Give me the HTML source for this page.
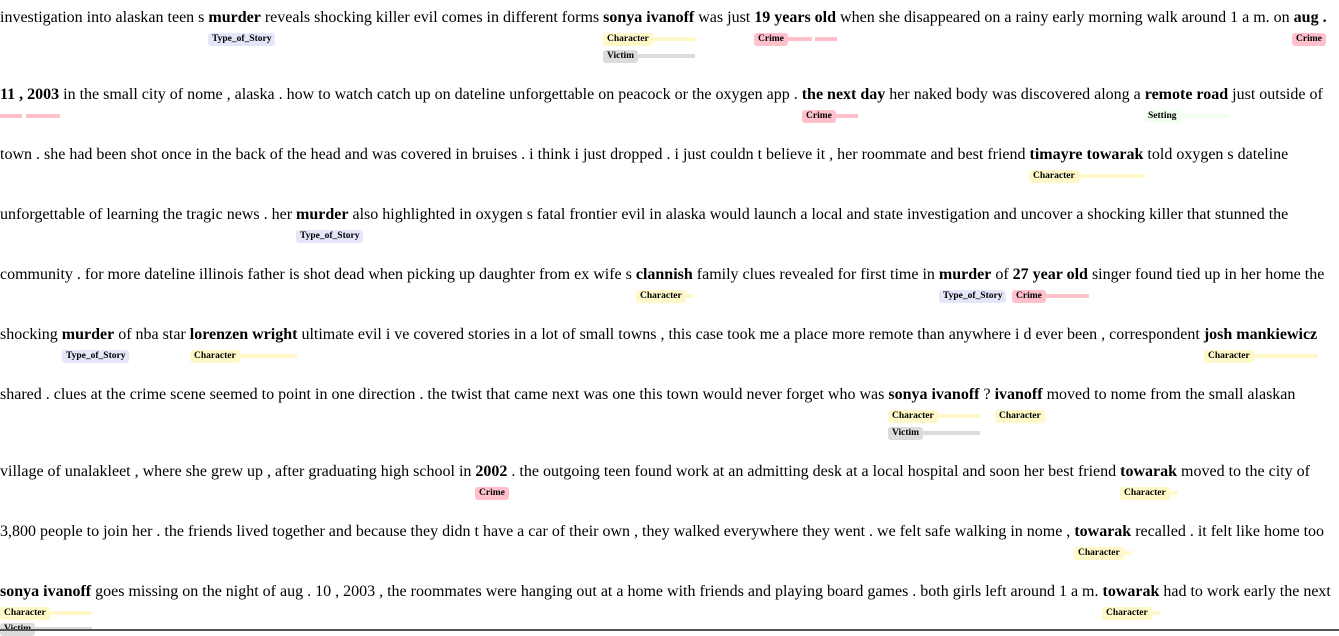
<!DOCTYPE html>
<html><head><meta charset="utf-8"><style>
body{margin:0;width:1339px;height:631px;background:#fff;position:relative;overflow:hidden;font-family:"Liberation Serif",serif;}
.t{position:absolute;left:0;font-size:16px;white-space:nowrap;color:#000;line-height:18px;margin-top:1px;}
.l{position:absolute;font-size:9.5px;font-weight:bold;padding:0 4px;height:13px;line-height:13px;border-radius:3px;margin-top:1px;}
.b{position:absolute;height:4px;margin-top:1px;}
.C{background:#fff9c9}.V{background:#dcdcdc}.R{background:#ffc0cb}.T{background:#e6e6fa}.S{background:#f0fff0}
</style></head><body>
<div class="t" style="top:8px">investigation into alaskan teen s <b>murder</b> reveals shocking killer evil comes in different forms <b>sonya ivanoff</b> was just <b>19 years old</b> when she disappeared on a rainy early morning walk around 1 a m. on <b>aug .</b></div>
<div class="t" style="top:85px"><b>11 , 2003</b> in the small city of nome , alaska . how to watch catch up on dateline unforgettable on peacock or the oxygen app . <b>the next day</b> her naked body was discovered along a <b>remote road</b> just outside of</div>
<div class="t" style="top:145px">town . she had been shot once in the back of the head and was covered in bruises . i think i just dropped . i just couldn t believe it , her roommate and best friend <b>timayre towarak</b> told oxygen s dateline</div>
<div class="t" style="top:205px">unforgettable of learning the tragic news . her <b>murder</b> also highlighted in oxygen s fatal frontier evil in alaska would launch a local and state investigation and uncover a shocking killer that stunned the</div>
<div class="t" style="top:265px">community . for more dateline illinois father is shot dead when picking up daughter from ex wife s <b>clannish</b> family clues revealed for first time in <b>murder</b> of <b>27 year old</b> singer found tied up in her home the</div>
<div class="t" style="top:325px">shocking <b>murder</b> of nba star <b>lorenzen wright</b> ultimate evil i ve covered stories in a lot of small towns , this case took me a place more remote than anywhere i d ever been , correspondent <b>josh mankiewicz</b></div>
<div class="t" style="top:385px">shared . clues at the crime scene seemed to point in one direction . the twist that came next was one this town would never forget who was <b>sonya ivanoff</b> ? <b>ivanoff</b> moved to nome from the small alaskan</div>
<div class="t" style="top:462px">village of unalakleet , where she grew up , after graduating high school in <b>2002</b> . the outgoing teen found work at an admitting desk at a local hospital and soon her best friend <b>towarak</b> moved to the city of</div>
<div class="t" style="top:522px">3,800 people to join her . the friends lived together and because they didn t have a car of their own , they walked everywhere they went . we felt safe walking in nome , <b>towarak</b> recalled . it felt like home too</div>
<div class="t" style="top:582px"><b>sonya ivanoff</b> goes missing on the night of aug . 10 , 2003 , the roommates were hanging out at a home with friends and playing board games . both girls left around 1 a m. <b>towarak</b> had to work early the next</div>

<div class="b C" style="left:603px;top:36px;width:92px"></div>
<div class="b V" style="left:603px;top:53px;width:92px"></div>
<div class="b R" style="left:754px;top:36px;width:58px"></div>
<div class="b R" style="left:815px;top:36px;width:22px"></div>
<div class="b R" style="left:0;top:113px;width:22px"></div>
<div class="b R" style="left:26px;top:113px;width:34px"></div>
<div class="b R" style="left:802px;top:113px;width:56px"></div>
<div class="b S" style="left:1144px;top:113px;width:85px"></div>
<div class="b C" style="left:1029px;top:173px;width:116px"></div>
<div class="b C" style="left:636px;top:293px;width:57px"></div>
<div class="b R" style="left:1012px;top:293px;width:77px"></div>
<div class="b C" style="left:190px;top:353px;width:107px"></div>
<div class="b C" style="left:1204px;top:353px;width:114px"></div>
<div class="b C" style="left:888px;top:413px;width:92px"></div>
<div class="b C" style="left:995px;top:413px;width:47px"></div>
<div class="b V" style="left:888px;top:430px;width:92px"></div>
<div class="b C" style="left:1120px;top:490px;width:58px"></div>
<div class="b C" style="left:1074px;top:550px;width:58px"></div>
<div class="b C" style="left:0;top:610px;width:92px"></div>
<div class="b V" style="left:0;top:626px;width:92px"></div>
<div class="b C" style="left:1102px;top:610px;width:58px"></div>

<span class="l T" style="left:208px;top:32px">Type_of_Story</span>
<span class="l C" style="left:603px;top:32px">Character</span>
<span class="l V" style="left:603px;top:49px">Victim</span>
<span class="l R" style="left:754px;top:32px">Crime</span>
<span class="l R" style="left:1292px;top:32px">Crime</span>
<span class="l R" style="left:802px;top:109px">Crime</span>
<span class="l S" style="left:1144px;top:109px">Setting</span>
<span class="l C" style="left:1029px;top:169px">Character</span>
<span class="l T" style="left:296px;top:229px">Type_of_Story</span>
<span class="l C" style="left:636px;top:289px">Character</span>
<span class="l T" style="left:939px;top:289px">Type_of_Story</span>
<span class="l R" style="left:1012px;top:289px">Crime</span>
<span class="l T" style="left:62px;top:349px">Type_of_Story</span>
<span class="l C" style="left:190px;top:349px">Character</span>
<span class="l C" style="left:1204px;top:349px">Character</span>
<span class="l C" style="left:888px;top:409px">Character</span>
<span class="l C" style="left:995px;top:409px">Character</span>
<span class="l V" style="left:888px;top:426px">Victim</span>
<span class="l R" style="left:475px;top:486px">Crime</span>
<span class="l C" style="left:1120px;top:486px">Character</span>
<span class="l C" style="left:1074px;top:546px">Character</span>
<span class="l C" style="left:0;top:606px">Character</span>
<span class="l V" style="left:0;top:622px">Victim</span>
<span class="l C" style="left:1102px;top:606px">Character</span>
<div style="position:absolute;left:0;top:629px;width:1339px;height:2px;background:#555"></div>
</body></html>
